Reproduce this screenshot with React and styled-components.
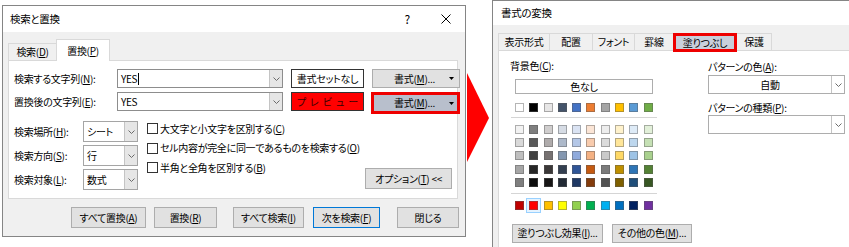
import React from "react";
import styled, { createGlobalStyle } from "styled-components";

const Global = createGlobalStyle`
  html, body { margin: 0; padding: 0; background: #fff; }
  body {
    font-family: "Noto Sans CJK JP", "Noto Sans", sans-serif;
    font-size: 10px;
    letter-spacing: -0.3px;
    color: #000;
    font-feature-settings: "palt";
    overflow: hidden;
  }
  * { box-sizing: border-box; }
  u { text-decoration-thickness: 1px; text-underline-offset: 1px; }
`;

const Page = styled.div`
  display: flex;
  align-items: flex-start;
  width: 849px;
  height: 247px;
  overflow: hidden;
`;

const Dialog = styled.div`
  flex: none;
  width: ${(p) => p.$w}px;
  height: ${(p) => p.$h}px;
  margin: ${(p) => p.$m};
  border: 1px solid #858585;
  background: #f0f0f0;
  display: flex;
  flex-direction: column;
`;

const TitleBar = styled.div`
  flex: none;
  height: ${(p) => p.$h}px;
  background: #fff;
  display: flex;
  align-items: center;
  padding-left: ${(p) => p.$pl}px;
  line-height: 14px;
  font-size: 10.5px;
`;

const TitleTools = styled.div`
  margin-left: auto;
  display: flex;
  align-items: center;
  gap: 31px;
  padding-right: 14px;
  font-size: 12px;
`;

const Body = styled.div`
  display: flex;
  flex-direction: column;
  padding: ${(p) => p.$pad};
`;

const TabsRow = styled.div`
  display: flex;
  align-items: flex-end;
  height: ${(p) => p.$h}px;
  margin-top: ${(p) => p.$mt}px;
`;

const Tab = styled.div`
  flex: none;
  width: ${(p) => p.$w}px;
  height: ${(p) => p.$h}px;
  margin-left: ${(p) => (p.$first ? 0 : -1)}px;
  margin-bottom: ${(p) => p.$mb || 0}px;
  border: 1px solid #d9d9d9;
  border-bottom: none;
  background: ${(p) => (p.$active ? "#fff" : "#f0f0f0")};
  display: flex;
  align-items: center;
  justify-content: center;
  line-height: 14px;
  white-space: nowrap;
  position: ${(p) => (p.$active ? "relative" : "static")};
  z-index: ${(p) => (p.$active ? 1 : "auto")};
`;

const HotTab = styled(Tab)`
  border: 3px solid #ee0000;
  background: #c9cfdb;
  position: relative;
  z-index: 2;
`;

const Panel = styled.div`
  flex: none;
  height: ${(p) => p.$h}px;
  background: #fff;
  border: 1px solid #d9d9d9;
  padding: ${(p) => p.$pad};
  display: flex;
  flex-direction: ${(p) => p.$dir || "column"};
`;

const FindGrid = styled.div`
  display: grid;
  grid-template-columns: 95px 166px 73px 88px;
  grid-template-rows: 19px 19px;
  column-gap: 8px;
  row-gap: 4px;
`;

const Label = styled.div`
  display: flex;
  align-items: center;
  white-space: nowrap;
  line-height: 14px;
`;

const Combo = styled.div`
  display: flex;
  align-items: stretch;
  height: ${(p) => p.$h || 19}px;
  width: ${(p) => (p.$w ? `${p.$w}px` : "auto")};
  background: #fff;
  border: 1px solid ${(p) => p.$bc || "#8d8d8d"};
`;

const ComboText = styled.div`
  flex: 1;
  display: flex;
  align-items: center;
  justify-content: ${(p) => (p.$center ? "center" : "flex-start")};
  padding-left: ${(p) => (p.$center ? 0 : 3)}px;
  line-height: 14px;
  white-space: nowrap;
  overflow: hidden;
`;

const DropPart = styled.div`
  flex: none;
  width: 13px;
  background: ${(p) => (p.$plain ? "#fff" : "#e6e6e6")};
  border-left: 1px solid #c4c4c4;
  display: flex;
  align-items: center;
  justify-content: center;
`;

const Caret = styled.span`
  display: inline-block;
  width: 1px;
  height: 12px;
  background: #000;
  margin-left: 1px;
`;

const SampleBox = styled.div`
  border: 1px solid #333;
  background: ${(p) => (p.$red ? "#ff0000" : "#fff")};
  color: ${(p) => (p.$red ? "#3a0000" : "#000")};
  display: flex;
  align-items: center;
  justify-content: center;
  letter-spacing: ${(p) => (p.$red ? 4 : -0.3)}px;
  padding-left: ${(p) => (p.$red ? 4 : 0)}px;
  line-height: 14px;
  white-space: nowrap;
`;

const Button = styled.div`
  flex: none;
  width: ${(p) => p.$w}px;
  height: ${(p) => p.$h || 21}px;
  margin-left: ${(p) => (p.$auto ? "auto" : `${p.$ml || 0}px`)};
  margin-top: ${(p) => p.$mt || 0}px;
  background: #e1e1e1;
  border: 1px solid ${(p) => (p.$default ? "#0078d7" : "#adadad")};
  display: flex;
  align-items: center;
  justify-content: center;
  line-height: 14px;
  white-space: nowrap;
`;

const FormatButton = styled.div`
  display: flex;
  align-items: center;
  padding: 0 5px 0 7px;
  background: #e1e1e1;
  border: 1px solid #adadad;
  line-height: 14px;
  white-space: nowrap;
`;

const HotFormatButton = styled(FormatButton)`
  height: 22px;
  margin-left: -1px;
  border: 3px solid #ee0000;
  background: #b8bfcc;
  padding: 0 3px 0 6px;
`;

const FmtText = styled.span`
  flex: 1;
  text-align: center;
`;

const OptionsArea = styled.div`
  display: flex;
  align-items: flex-start;
  margin-top: 10px;
`;

const OptGrid = styled.div`
  display: grid;
  grid-template-columns: 69px 55px;
  grid-template-rows: 21px 21px 21px;
  row-gap: 3px;
`;

const CheckCol = styled.div`
  flex: none;
  display: flex;
  flex-direction: column;
  margin-left: 9px;
  margin-top: -2px;
`;

const CheckRow = styled.div`
  height: 19.5px;
  display: flex;
  align-items: center;
  white-space: nowrap;
  line-height: 14px;
`;

const CheckBox = styled.span`
  flex: none;
  width: 11px;
  height: 11px;
  border: 1px solid #333;
  background: #fff;
  margin-right: 2px;
`;

const ButtonRow = styled.div`
  display: flex;
  margin-top: ${(p) => p.$mt}px;
  margin-left: ${(p) => p.$ml || 0}px;
  gap: ${(p) => p.$gap || 0}px;
`;

const Arrow = styled.svg`
  flex: none;
  display: block;
`;

const ColLeft = styled.div`
  flex: none;
  width: 146px;
  display: flex;
  flex-direction: column;
`;

const ColRight = styled.div`
  flex: none;
  width: 137px;
  margin-left: 51px;
  display: flex;
  flex-direction: column;
`;

const SectionLabel = styled.div`
  line-height: ${(p) => p.$lh || 15}px;
  margin-top: ${(p) => p.$mt}px;
  margin-left: ${(p) => p.$ml || 0}px;
  margin-bottom: ${(p) => p.$mb || 0}px;
  white-space: nowrap;
`;

const NoColorButton = styled.div`
  height: 15px;
  margin: 6px 4px 0 4px;
  border: 1px solid #adadad;
  background: #fff;
  display: flex;
  align-items: center;
  justify-content: center;
  line-height: 13px;
`;

const SwatchRow = styled.div`
  display: flex;
  gap: 5.3px;
  margin-left: 4px;
  margin-top: ${(p) => p.$mt || 0}px;
`;

const SwatchStack = styled.div`
  display: flex;
  flex-direction: column;
  gap: 4.2px;
  margin-top: 7px;
`;

const Swatch = styled.span`
  flex: none;
  width: 9px;
  height: 9px;
  background: ${(p) => p.$c};
  border: 1px solid rgba(90, 90, 90, 0.45);
  box-shadow: ${(p) =>
    p.$sel ? "0 0 0 2px #e5f3ff, 0 0 0 3px #99d1ff" : "none"};
`;

const Separator = styled.div`
  height: 1px;
  background: #d5d5d5;
  margin-top: ${(p) => p.$mt}px;
`;

const Chevron = () => (
  <svg width="7" height="4" viewBox="0 0 7 4">
    <polyline points="0.5,0.5 3.5,3.5 6.5,0.5" fill="none" stroke="#6b6b6b" strokeWidth="1" />
  </svg>
);

const DropTri = () => (
  <svg width="5" height="3" viewBox="0 0 5 3">
    <polygon points="0,0 5,0 2.5,3" fill="#000" />
  </svg>
);

const CloseX = () => (
  <svg width="10" height="10" viewBox="0 0 10 10">
    <path d="M0.5 0.5 L9.5 9.5 M9.5 0.5 L0.5 9.5" stroke="#000" strokeWidth="1" fill="none" />
  </svg>
);

const themeRow = ["#ffffff", "#000000", "#e7e6e6", "#44546a", "#4472c4", "#ed7d31", "#a5a5a5", "#ffc000", "#5b9bd5", "#70ad47"];
const tints = [
  ["#f2f2f2", "#7f7f7f", "#d0cece", "#d6dce5", "#dae3f3", "#fbe5d6", "#ededed", "#fff2cc", "#deebf7", "#e2f0d9"],
  ["#d9d9d9", "#595959", "#afabab", "#adb9ca", "#b4c7e7", "#f8cbad", "#dbdbdb", "#ffe699", "#bdd7ee", "#c5e0b4"],
  ["#bfbfbf", "#404040", "#767171", "#8497b0", "#8faadc", "#f4b183", "#c9c9c9", "#ffd966", "#9dc3e6", "#a9d18e"],
  ["#a6a6a6", "#262626", "#3b3838", "#333f50", "#2f5597", "#c55a11", "#7b7b7b", "#bf9000", "#2e75b6", "#548235"],
  ["#7f7f7f", "#0d0d0d", "#171616", "#222a35", "#1f3864", "#843c0c", "#525252", "#7f6000", "#1f4e79", "#385723"],
];
const standard = ["#c00000", "#ff0000", "#ffc000", "#ffff00", "#92d050", "#00b050", "#00b0f0", "#0070c0", "#002060", "#7030a0"];

const rightTabs = [
  { t: "表示形式", w: 52 },
  { t: "配置", w: 44 },
  { t: "フォント", w: 43 },
  { t: "罫線", w: 40 },
];

export default function App() {
  return (
    <>
      <Global />
      <Page>
        <Dialog $w={464} $h={232} $m="5px 0 0 2px">
          <TitleBar $h={26} $pl={7}>
            検索と置換
            <TitleTools>
              <span>?</span>
              <CloseX />
            </TitleTools>
          </TitleBar>
          <Body $pad="0 7px 0 5px">
            <TabsRow $h={21} $mt={7}>
              <Tab $first $w={49} $h={17}>
                検索(<u>D</u>)
              </Tab>
              <Tab $active $w={54} $h={22} $mb={-1}>
                置換(<u>P</u>)
              </Tab>
            </TabsRow>
            <Panel $h={139} $pad="8px 5px 0 5px">
              <FindGrid>
                <Label>
                  検索する文字列(<u>N</u>):
                </Label>
                <Combo>
                  <ComboText>
                    YES
                    <Caret />
                  </ComboText>
                  <DropPart>
                    <Chevron />
                  </DropPart>
                </Combo>
                <SampleBox>書式セットなし</SampleBox>
                <FormatButton>
                  <FmtText>
                    書式(<u>M</u>)...
                  </FmtText>
                  <DropTri />
                </FormatButton>
                <Label>
                  置換後の文字列(<u>E</u>):
                </Label>
                <Combo>
                  <ComboText>YES</ComboText>
                  <DropPart>
                    <Chevron />
                  </DropPart>
                </Combo>
                <SampleBox $red>プレビュー</SampleBox>
                <HotFormatButton>
                  <FmtText>
                    書式(<u>M</u>)...
                  </FmtText>
                  <DropTri />
                </HotFormatButton>
              </FindGrid>
              <OptionsArea>
                <OptGrid>
                  <Label>
                    検索場所(<u>H</u>):
                  </Label>
                  <Combo $h={21} $bc="#a5a5a5">
                    <ComboText>シート</ComboText>
                    <DropPart>
                      <Chevron />
                    </DropPart>
                  </Combo>
                  <Label>
                    検索方向(<u>S</u>):
                  </Label>
                  <Combo $h={21} $bc="#a5a5a5">
                    <ComboText>行</ComboText>
                    <DropPart>
                      <Chevron />
                    </DropPart>
                  </Combo>
                  <Label>
                    検索対象(<u>L</u>):
                  </Label>
                  <Combo $h={21} $bc="#a5a5a5">
                    <ComboText>数式</ComboText>
                    <DropPart>
                      <Chevron />
                    </DropPart>
                  </Combo>
                </OptGrid>
                <CheckCol>
                  <CheckRow>
                    <CheckBox />
                    大文字と小文字を区別する(<u>C</u>)
                  </CheckRow>
                  <CheckRow>
                    <CheckBox />
                    セル内容が完全に同一であるものを検索する(<u>O</u>)
                  </CheckRow>
                  <CheckRow>
                    <CheckBox />
                    半角と全角を区別する(<u>B</u>)
                  </CheckRow>
                </CheckCol>
                <Button $w={87} $auto $mt={47}>
                  オプション(<u>T</u>)&nbsp;&lt;&lt;
                </Button>
              </OptionsArea>
            </Panel>
            <ButtonRow $mt={8}>
              <Button $w={75} $ml={63}>
                すべて置換(<u>A</u>)
              </Button>
              <Button $w={63} $ml={8}>
                置換(<u>R</u>)
              </Button>
              <Button $w={71} $ml={16}>
                すべて検索(<u>I</u>)
              </Button>
              <Button $w={67} $ml={9} $default>
                次を検索(<u>F</u>)
              </Button>
              <Button $w={62} $ml={17}>
                閉じる
              </Button>
            </ButtonRow>
          </Body>
        </Dialog>

        <Arrow width="26" height="247" viewBox="0 0 26 247">
          <polygon points="1,73 23,118 1,162" fill="#ff0000" />
        </Arrow>

        <Dialog $w={380} $h={262} $m="0">
          <TitleBar $h={24} $pl={8}>
            書式の変換
          </TitleBar>
          <Body $pad="0 0 0 5px">
            <TabsRow $h={17} $mt={8}>
              {rightTabs.map((t, i) => (
                <Tab key={t.t} $first={i === 0} $w={t.w} $h={17}>
                  {t.t}
                </Tab>
              ))}
              <HotTab $w={64} $h={19} $mb={-2}>
                塗りつぶし
              </HotTab>
              <Tab $w={36} $h={17}>
                保護
              </Tab>
            </TabsRow>
            <Panel $h={230} $pad="0 0 0 12px" $dir="row">
              <ColLeft>
                <SectionLabel $mt={7} $ml={-1}>
                  背景色(<u>C</u>):
                </SectionLabel>
                <NoColorButton>色なし</NoColorButton>
                <SwatchRow $mt={9}>
                  {themeRow.map((c, i) => (
                    <Swatch key={i} $c={c} />
                  ))}
                </SwatchRow>
                <Separator $mt={5} />
                <SwatchStack>
                  {tints.map((row, r) => (
                    <SwatchRow key={r}>
                      {row.map((c, i) => (
                        <Swatch key={i} $c={c} />
                      ))}
                    </SwatchRow>
                  ))}
                </SwatchStack>
                <Separator $mt={6} />
                <SwatchRow $mt={7}>
                  {standard.map((c, i) => (
                    <Swatch key={i} $c={c} $sel={i === 1} />
                  ))}
                </SwatchRow>
                <ButtonRow $mt={14} $ml={1} $gap={9}>
                  <Button $w={91} $h={19}>
                    塗りつぶし効果(<u>I</u>)...
                  </Button>
                  <Button $w={80} $h={19}>
                    その他の色(<u>M</u>)...
                  </Button>
                </ButtonRow>
              </ColLeft>
              <ColRight>
                <SectionLabel $mt={8} $mb={1}>
                  パターンの色(<u>A</u>):
                </SectionLabel>
                <Combo $h={19} $bc="#adadad">
                  <ComboText $center>自動</ComboText>
                  <DropPart $plain>
                    <Chevron />
                  </DropPart>
                </Combo>
                <SectionLabel $mt={7} $lh={14}>
                  パターンの種類(<u>P</u>):
                </SectionLabel>
                <Combo $h={19} $bc="#adadad">
                  <ComboText $center />
                  <DropPart $plain>
                    <Chevron />
                  </DropPart>
                </Combo>
              </ColRight>
            </Panel>
          </Body>
        </Dialog>
      </Page>
    </>
  );
}
